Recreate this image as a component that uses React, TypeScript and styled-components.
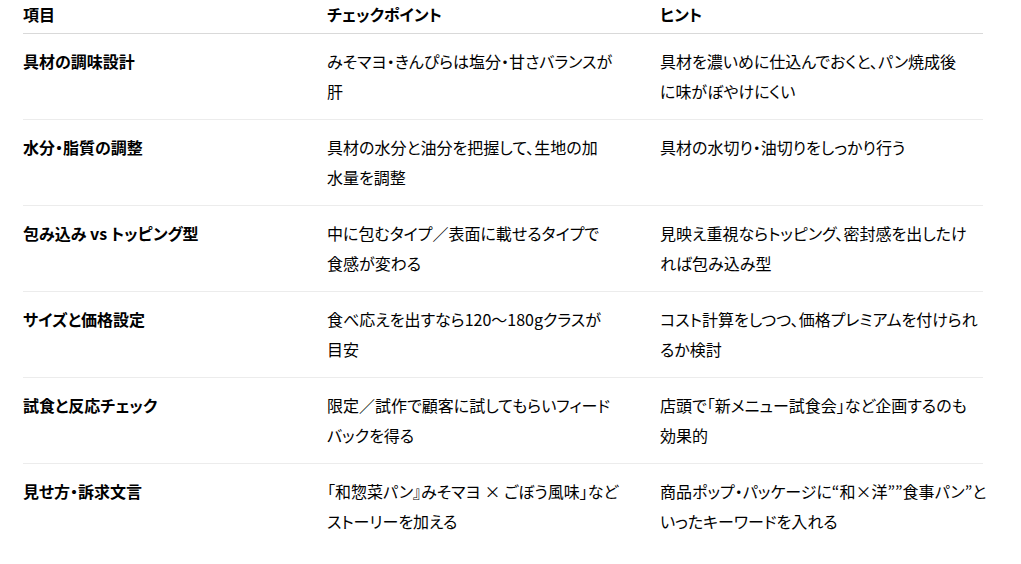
import React from 'react'
import styled, { createGlobalStyle } from 'styled-components'

const GlobalStyle = createGlobalStyle`
  html, body {
    margin: 0;
    padding: 0;
    background: #ffffff;
  }
  body {
    font-family: "Noto Sans CJK JP", "Noto Sans", sans-serif;
    color: #000000;
  }
`

interface Row {
  item: string
  point: string
  hint: string
}

// line breaks follow the reference layout
const rows: Row[] = [
  {
    item: '具材の調味設計',
    point: 'みそマヨ・きんぴらは塩分・甘さバランスが\n肝',
    hint: '具材を濃いめに仕込んでおくと、パン焼成後\nに味がぼやけにくい',
  },
  {
    item: '水分・脂質の調整',
    point: '具材の水分と油分を把握して、生地の加\n水量を調整',
    hint: '具材の水切り・油切りをしっかり行う',
  },
  {
    item: '包み込み vs トッピング型',
    point: '中に包むタイプ／表面に載せるタイプで\n食感が変わる',
    hint: '見映え重視ならトッピング、密封感を出したけ\nれば包み込み型',
  },
  {
    item: 'サイズと価格設定',
    point: '食べ応えを出すなら120〜180gクラスが\n目安',
    hint: 'コスト計算をしつつ、価格プレミアムを付けられ\nるか検討',
  },
  {
    item: '試食と反応チェック',
    point: '限定／試作で顧客に試してもらいフィード\nバックを得る',
    hint: '店頭で「新メニュー試食会」など企画するのも\n効果的',
  },
  {
    item: '見せ方・訴求文言',
    point: '「和惣菜パン』みそマヨ × ごぼう風味」など\nストーリーを加える',
    hint: '商品ポップ・パッケージに“和×洋””食事パン”と\nいったキーワードを入れる',
  },
]

const Table = styled.div`
  width: 960px;
  margin-left: 23px;
  display: grid;
  grid-template-columns: 304px 333px 323px;
  font-size: 16px;
  line-height: 30px;
  font-feature-settings: 'palt';
`

const HeadCell = styled.div`
  padding: 0 0 4px 0;
  margin-top: -1px;
  font-weight: 700;
  border-bottom: 1px solid #d9d9d9;
`

const Cell = styled.div<{ $bold?: boolean; $last?: boolean }>`
  padding: 12px 0 13px 0;
  white-space: pre;
  font-weight: ${(p) => (p.$bold ? 700 : 400)};
  border-bottom: ${(p) => (p.$last ? 'none' : '1px solid #ececec')};
`

export default function App() {
  return (
    <>
      <GlobalStyle />
      <Table>
        <HeadCell>項目</HeadCell>
        <HeadCell>チェックポイント</HeadCell>
        <HeadCell>ヒント</HeadCell>
        {rows.map((r, i) => {
          const last = i === rows.length - 1
          return (
            <React.Fragment key={r.item}>
              <Cell $bold $last={last}>
                {r.item}
              </Cell>
              <Cell $last={last}>{r.point}</Cell>
              <Cell $last={last}>{r.hint}</Cell>
            </React.Fragment>
          )
        })}
      </Table>
    </>
  )
}
